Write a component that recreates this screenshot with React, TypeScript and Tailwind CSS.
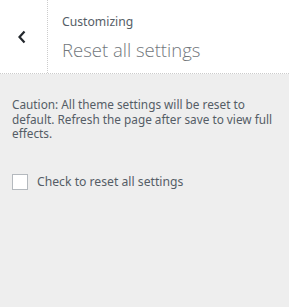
import React, { useState } from 'react';

const font = { fontFamily: '"Noto Sans", "Open Sans", sans-serif' };

export default function App() {
    const [checked, setChecked] = useState(false);

    return (
        <div className="w-[289px] h-[307px] bg-[#eeeeee] text-[#555d66] flex flex-col" style={font}>
            {/* header */}
            <div className="h-[74px] bg-white flex border-b border-dotted border-[#cccccc]">
                <button className="w-[48px] shrink-0 flex items-center justify-center pr-[3px] border-r border-dotted border-[#cccccc] text-[#23282d]">
                    <svg width="10" height="14" viewBox="0 0 10 14" fill="none">
                        <path d="M7.5 1.5 L2.5 7 L7.5 12.5" stroke="currentColor" strokeWidth="2.2" />
                    </svg>
                </button>
                <div className="flex flex-col pl-[14px] pt-[13px]">
                    <span className="text-[12.2px] leading-[18px] text-[#555d66]">Customizing</span>
                    <span
                        className="text-[18.5px] leading-[28px] font-light text-[#72777c] mt-[5px]"
                        style={{ fontFamily: '"Open Sans", "Noto Sans", sans-serif' }}
                    >
                        Reset all settings
                    </span>
                </div>
            </div>

            {/* body */}
            <div className="pl-[12px] pr-[6px] pt-[23px]">
                <p className="text-[11.8px] leading-[14.5px] text-[#555d66]">
                    Caution: All theme settings will be reset to default. Refresh the page after save to view full effects.
                </p>
                <label className="flex items-center gap-[9px] mt-[32px] cursor-pointer">
                    <input
                        type="checkbox"
                        checked={checked}
                        onChange={(e) => setChecked(e.target.checked)}
                        className="appearance-none w-[16px] h-[16px] bg-white border border-[#b4b9be] shrink-0"
                    />
                    <span className="text-[12.2px] text-[#555d66]">Check to reset all settings</span>
                </label>
            </div>
        </div>
    );
}
